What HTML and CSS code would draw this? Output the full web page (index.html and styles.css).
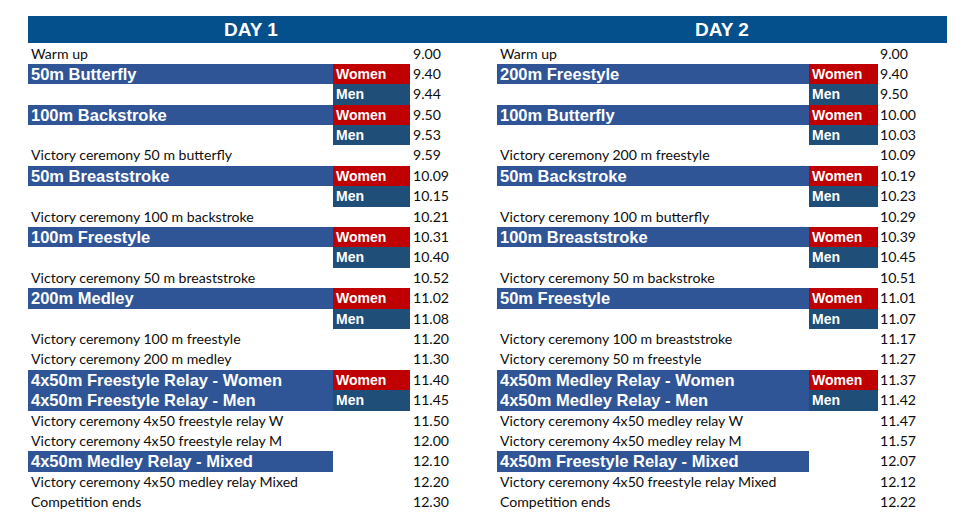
FILE: index.html
```html
<!DOCTYPE html>
<html lang="en">
<head>
<meta charset="utf-8">
<title>Competition schedule</title>
<link rel="stylesheet" href="styles.css">
</head>
<body>
<main class="schedule">
  <header class="days-head">
    <h2 class="day-title">DAY 1</h2>
    <h2 class="day-title">DAY 2</h2>
  </header>
  <div class="days">
    <section class="day day-1">
      <div class="row plain"><span class="label">Warm up</span><span class="time">9.00</span></div>
      <div class="row"><span class="event">50m Butterfly</span><span class="g women">Women</span><span class="time">9.40</span></div>
      <div class="row"><span class="blank"></span><span class="g men">Men</span><span class="time">9.44</span></div>
      <div class="row"><span class="event">100m Backstroke</span><span class="g women">Women</span><span class="time">9.50</span></div>
      <div class="row"><span class="blank"></span><span class="g men">Men</span><span class="time">9.53</span></div>
      <div class="row plain"><span class="label">Victory ceremony 50 m butterfly</span><span class="time">9.59</span></div>
      <div class="row"><span class="event">50m Breaststroke</span><span class="g women">Women</span><span class="time">10.09</span></div>
      <div class="row"><span class="blank"></span><span class="g men">Men</span><span class="time">10.15</span></div>
      <div class="row plain"><span class="label">Victory ceremony 100 m backstroke</span><span class="time">10.21</span></div>
      <div class="row"><span class="event">100m Freestyle</span><span class="g women">Women</span><span class="time">10.31</span></div>
      <div class="row"><span class="blank"></span><span class="g men">Men</span><span class="time">10.40</span></div>
      <div class="row plain"><span class="label">Victory ceremony 50 m breaststroke</span><span class="time">10.52</span></div>
      <div class="row"><span class="event">200m Medley</span><span class="g women">Women</span><span class="time">11.02</span></div>
      <div class="row"><span class="blank"></span><span class="g men">Men</span><span class="time">11.08</span></div>
      <div class="row plain"><span class="label">Victory ceremony 100 m freestyle</span><span class="time">11.20</span></div>
      <div class="row plain"><span class="label">Victory ceremony 200 m medley</span><span class="time">11.30</span></div>
      <div class="row"><span class="event">4x50m Freestyle Relay - Women</span><span class="g women">Women</span><span class="time">11.40</span></div>
      <div class="row"><span class="event">4x50m Freestyle Relay - Men</span><span class="g men">Men</span><span class="time">11.45</span></div>
      <div class="row plain"><span class="label">Victory ceremony 4x50 freestyle relay W</span><span class="time">11.50</span></div>
      <div class="row plain"><span class="label">Victory ceremony 4x50 freestyle relay M</span><span class="time">12.00</span></div>
      <div class="row"><span class="event">4x50m Medley Relay - Mixed</span><span class="blank"></span><span class="time">12.10</span></div>
      <div class="row plain"><span class="label">Victory ceremony 4x50 medley relay Mixed</span><span class="time">12.20</span></div>
      <div class="row plain"><span class="label">Competition ends</span><span class="time">12.30</span></div>
    </section>
    <section class="day day-2">
      <div class="row plain"><span class="label">Warm up</span><span class="time">9.00</span></div>
      <div class="row"><span class="event">200m Freestyle</span><span class="g women">Women</span><span class="time">9.40</span></div>
      <div class="row"><span class="blank"></span><span class="g men">Men</span><span class="time">9.50</span></div>
      <div class="row"><span class="event">100m Butterfly</span><span class="g women">Women</span><span class="time">10.00</span></div>
      <div class="row"><span class="blank"></span><span class="g men">Men</span><span class="time">10.03</span></div>
      <div class="row plain"><span class="label">Victory ceremony 200 m freestyle</span><span class="time">10.09</span></div>
      <div class="row"><span class="event">50m Backstroke</span><span class="g women">Women</span><span class="time">10.19</span></div>
      <div class="row"><span class="blank"></span><span class="g men">Men</span><span class="time">10.23</span></div>
      <div class="row plain"><span class="label">Victory ceremony 100 m butterfly</span><span class="time">10.29</span></div>
      <div class="row"><span class="event">100m Breaststroke</span><span class="g women">Women</span><span class="time">10.39</span></div>
      <div class="row"><span class="blank"></span><span class="g men">Men</span><span class="time">10.45</span></div>
      <div class="row plain"><span class="label">Victory ceremony 50 m backstroke</span><span class="time">10.51</span></div>
      <div class="row"><span class="event">50m Freestyle</span><span class="g women">Women</span><span class="time">11.01</span></div>
      <div class="row"><span class="blank"></span><span class="g men">Men</span><span class="time">11.07</span></div>
      <div class="row plain"><span class="label">Victory ceremony 100 m breaststroke</span><span class="time">11.17</span></div>
      <div class="row plain"><span class="label">Victory ceremony 50 m freestyle</span><span class="time">11.27</span></div>
      <div class="row"><span class="event">4x50m Medley Relay - Women</span><span class="g women">Women</span><span class="time">11.37</span></div>
      <div class="row"><span class="event">4x50m Medley Relay - Men</span><span class="g men">Men</span><span class="time">11.42</span></div>
      <div class="row plain"><span class="label">Victory ceremony 4x50 medley relay W</span><span class="time">11.47</span></div>
      <div class="row plain"><span class="label">Victory ceremony 4x50 medley relay M</span><span class="time">11.57</span></div>
      <div class="row"><span class="event">4x50m Freestyle Relay - Mixed</span><span class="blank"></span><span class="time">12.07</span></div>
      <div class="row plain"><span class="label">Victory ceremony 4x50 freestyle relay Mixed</span><span class="time">12.12</span></div>
      <div class="row plain"><span class="label">Competition ends</span><span class="time">12.22</span></div>
    </section>
  </div>
</main>
</body>
</html>
```

FILE: styles.css
```css
html, body {
  margin: 0;
  padding: 0;
  background: #ffffff;
}

.schedule {
  padding: 16px 0 0 28px;
  width: 919px;
  font-family: "Lato", "Open Sans", sans-serif;
  color: #0d0d0d;
}

.days-head {
  display: grid;
  grid-template-columns: 446px 450px;
  column-gap: 23px;
  height: 27px;
  background: #03508c;
}

.day-title {
  margin: 0;
  font-family: "Liberation Sans", Arial, sans-serif;
  font-weight: bold;
  font-size: 19px;
  line-height: 27px;
  color: #ffffff;
  text-align: center;
}

.days {
  display: grid;
  grid-template-columns: 446px 450px;
  column-gap: 23px;
  padding-top: 0.5px;
}

.day {
  display: grid;
  grid-auto-rows: 20.4px;
}

.day-1 .row {
  grid-template-columns: 305px 77px 64px;
}

.day-2 .row {
  grid-template-columns: 312px 69px 69px;
}

.row {
  display: grid;
  align-items: stretch;
}

.label {
  grid-column: 1 / 3;
  padding-left: 3px;
  font-size: 14.1px;
  line-height: 20.4px;
  white-space: nowrap;
}

.time {
  grid-column: 3;
  padding-left: 3px;
  font-size: 14.1px;
  line-height: 20.4px;
}

.day-2 .time {
  padding-left: 2px;
}

.event {
  background: #2f5597;
  color: #ffffff;
  font-family: "Liberation Sans", Arial, sans-serif;
  font-weight: bold;
  font-size: 16.5px;
  line-height: 20.4px;
  padding-left: 3px;
  white-space: nowrap;
}

.g {
  color: #ffffff;
  font-family: "Liberation Sans", Arial, sans-serif;
  font-weight: bold;
  font-size: 14px;
  line-height: 20.4px;
  padding-left: 3px;
}

.women {
  background: #c00000;
}

.men {
  background: #1f4e79;
}
```
